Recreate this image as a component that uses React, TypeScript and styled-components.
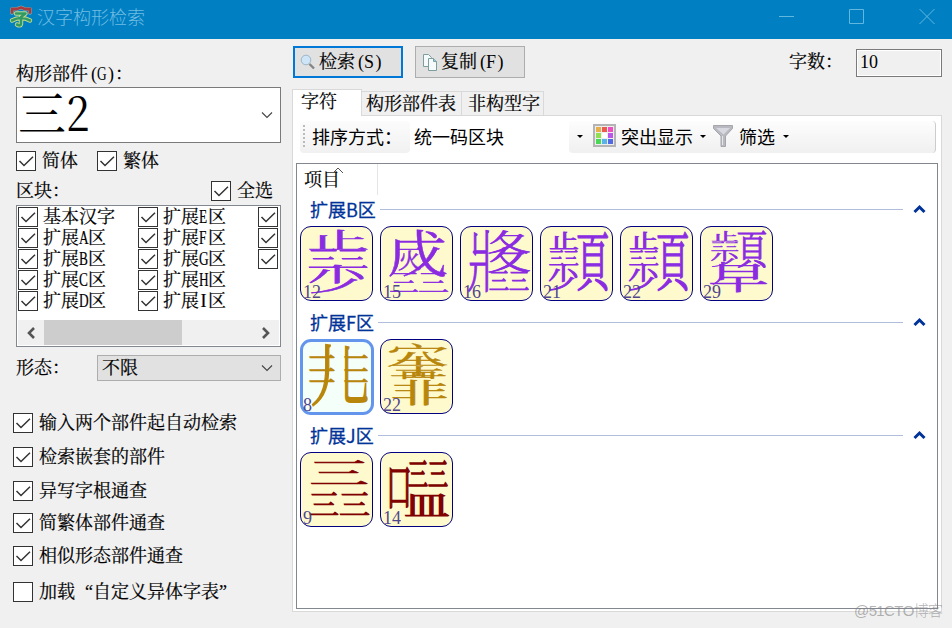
import React from "react";
import styled, { createGlobalStyle } from "styled-components";

const Global = createGlobalStyle`
  * { box-sizing: border-box; }
  body { margin: 0; background: #f0f0f0; overflow: hidden; }
`;
const songti = `"Liberation Serif", "Noto Serif CJK SC", "Noto Sans CJK SC", serif`;
const heiti = `"Noto Sans CJK SC", sans-serif`;

const Window = styled.div`
  position: relative; width: 952px; height: 628px; background: #f0f0f0;
  font: 18px/20px ${songti}; color: #000; white-space: nowrap;
  display: flex; flex-direction: column;
`;
const TitleBar = styled.header`
  height: 39px; flex: none; background: #0080c2; color: #72bce2; display: flex;
  align-items: flex-start; padding: 5px 17px 0 9px; font: 300 18px/24px ${heiti};
`;
const Title = styled.span` margin: -1px 0 0 4px; flex: 1; `;
const WindowButtons = styled.div` display: flex; gap: 54px; padding-top: 3px; svg { display: block; } `;
const Body = styled.main` flex: 1; display: flex; `;
const Sidebar = styled.aside` width: 292px; padding: 25px 11px 0 16px; display: flex; flex-direction: column; -webkit-text-stroke: 0.2px #000; `;
const Content = styled.section` width: 650px; padding-top: 7px; display: flex; flex-direction: column; `;
const Label = styled.span<{ $w?: number }>` ${p => p.$w ? `width:${p.$w}px;flex:none;` : ""} `;
const Letter = styled.span` display: inline-block; width: 9px; transform: scaleX(0.74); transform-origin: left; `;
const NarrowLetter = styled(Letter)` transform: none; text-align: center; `;
const Keys = styled.span` display: inline-flex; padding-left: 3px; -webkit-text-stroke: 0; `;
const Paren = styled.span` width: 6px; &:last-child { width: 9px; padding-left: 2px; } `;
const Quote = styled.span<{ $right?: boolean }>` display: inline-block; width: 18px; text-align: ${p => p.$right ? "right" : "left"}; `;
const PartsCombo = styled.div`
  height: 56px; margin-top: 3px; background: #fff; border: 1px solid #7a7a7a; padding: 0 7px 0 2px;
  display: flex; align-items: center; justify-content: space-between; font-size: 48px; line-height: 52px; -webkit-text-stroke: 0;
`;
const PartsText = styled.span` padding-bottom: 4px; margin-left: -1px; `;
const Digit = styled.span` display: inline-block; transform: scale(0.88, 0.97); transform-origin: left 75%; font-family: "Noto Serif CJK SC", "Liberation Serif", serif; `;
const Row = styled.div<{ $top: number }>` display: flex; align-items: center; height: 20px; margin-top: ${p => p.$top}px; `;
const Box = styled.span`
  width: 20px; height: 20px; flex: none; border: 1px solid #333; background: #fff; display: block;
  svg { display: block; }
`;
const CheckText = styled.span<{ $gap: number }>` margin-left: ${p => p.$gap}px; `;
const Spacer = styled.span` flex: 1; `;
const BlockList = styled.div` height: 142px; margin-top: 4px; border: 1px solid #828790; background: #fff; padding: 1px; display: flex; flex-direction: column; `;
const BlockGrid = styled.div`
  flex: 1; overflow: hidden; display: grid; grid-auto-flow: column;
  grid-template-rows: repeat(5, 21px); grid-auto-columns: 120px;
`;
const BlockItem = styled.div` display: flex; height: 20px; line-height: 20px; `;
const Scrollbar = styled.div` height: 25px; background: #f0f0f0; display: flex; align-items: center; `;
const Thumb = styled.div` width: 139px; height: 25px; background: #cdcdcd; margin-right: 71px; `;
const ArrowSlot = styled.span` width: 26px; display: flex; justify-content: center; `;
const Select = styled.div`
  flex: 1; height: 26px; border: 1px solid #adadad; background: #e1e1e1; display: flex; align-items: center;
  justify-content: space-between; padding: 0 7px 0 4px;
`;
const Options = styled.div` margin: 18px 0 0 -3px; `;

const TopBar = styled.div` height: 32px; display: flex; align-items: center; padding-left: 1px; -webkit-text-stroke: 0.2px #000; `;
const Button = styled.button<{ $primary?: boolean }>`
  width: 110px; height: 32px; margin-right: 12px; font: inherit; background: #e1e1e1;
  border: ${p => p.$primary ? "2px solid #0078d7" : "1px solid #adadad"};
  padding: 0 0 1px ${p => p.$primary ? 5 : 6}px;
  display: flex; align-items: center; gap: 3px; color: #000;
`;
const Count = styled.div` width: 86px; height: 28px; border: 1px solid #7a7a7a; padding: 2px 3px; box-shadow: inset 0 0 0 1px #fff; margin-top: 2px; -webkit-text-stroke: 0; `;
const Tabs = styled.div` height: 37px; display: flex; align-items: flex-end; -webkit-text-stroke: 0.2px #000; `;
const Tab = styled.div<{ $w: number; $pad: number; $active?: boolean }>`
  width: ${p => p.$w}px; height: ${p => p.$active ? 27 : 24}px; padding: 2px 0 0 ${p => p.$pad}px;
  background: ${p => p.$active ? "#fff" : "#f0f0f0"}; border: 1px solid #d9d9d9; border-bottom: 0;
  border-left-width: ${p => p.$active ? 1 : 0}px; margin-bottom: ${p => p.$active ? -1 : 0}px; position: relative; z-index: 1;
`;
const Panel = styled.div` height: 497px; border: 1px solid #d9d9d9; background: #fff; padding: 5px 3px 2px 3px; display: flex; flex-direction: column; `;
const Toolbar = styled.div`
  height: 32px; margin: 0 2px 10px 4px; display: flex; align-items: center; font-family: ${heiti};
`;
const SortLabel = styled.div` width: 110px; height: 32px; line-height: 28px; padding: 0 0 2px 3px; background: linear-gradient(#fcfcfc, #f1f1f1); display: flex; align-items: center; gap: 7px; border-radius: 4px; `;
const Grip = styled.span` width: 2px; height: 23px; background: repeating-linear-gradient(#bbb 0 2px, transparent 2px 4px); `;
const SortField = styled.div` width: 159px; height: 30px; line-height: 29px; background: #fff; padding-left: 4px; `;
const ToolGroup = styled.div`
  flex: 1; height: 32px; display: flex; align-items: center; background: linear-gradient(#fdfdfd, #f0f0f0);
  border-right: 1px solid #ccc; border-radius: 4px; padding: 0 0 3px 8px;
`;
const Caret = styled.span<{ $l?: number; $r?: number }>`
  border: 3px solid transparent; border-top-color: #000; border-bottom: 0;
  margin: 2px ${p => p.$r || 0}px 0 ${p => p.$l || 0}px;
`;
const ToolText = styled.span<{ $gap: number }>` margin-left: ${p => p.$gap}px; `;
const ListView = styled.div` flex: 1; border: 1px solid #828790; background: #fff; `;
const ColumnHead = styled.div` position: relative; width: 81px; height: 31px; border-right: 1px solid #e5e5e5; padding: 6px 0 0 7px; -webkit-text-stroke: 0.2px #000; svg { position: absolute; left: 35px; top: 3px; } `;
const Group = styled.div` height: 113px; padding: 4px 11px 0 3px; `;
const GroupHead = styled.div` height: 20px; display: flex; align-items: center; padding-left: 10px; color: #003399; font: 18px/20px ${heiti}; -webkit-text-stroke: 0.3px #003399; svg { margin: 0 0 1px 10px; } `;
const Line = styled.span` height: 1px; flex: 1; background: #b0bddb; margin-left: 4px; `;
const Cards = styled.div` display: flex; gap: 7px; margin-top: 7px; `;
const Card = styled.div<{ $selected?: boolean }>`
  position: relative; width: ${p => p.$selected ? 74 : 73}px; height: ${p => p.$selected ? 76 : 75}px; border-radius: 11px;
  margin: ${p => p.$selected ? "0 -1px -1px 0" : "0"};
  border: ${p => p.$selected ? "3px solid #6495ed" : "1px solid #000080"};
  background: ${p => p.$selected ? "#f5fffa" : "#fffacd"};
`;
const GlyphArt = styled.svg<{ $inset?: boolean }>` display: block; overflow: visible; margin: ${p => p.$inset ? "-2px" : "0"}; width: 71px; height: 73px; `;
const Strokes = styled.span<{ $inset?: boolean }>`
  position: absolute; left: ${p => p.$inset ? 0 : 2}px; bottom: ${p => p.$inset ? -3 : -2}px; color: #483d8b; opacity: .95;
  font-size: 18px; line-height: 20px;
`;
const Watermark = styled.div` position: absolute; left: 854px; top: 600px; color: rgba(130,130,130,.6); font: 300 15px/22px "Liberation Sans", "Noto Sans CJK SC", sans-serif; letter-spacing: -0.6px; `;

const Check = ({ on = true }: { on?: boolean }) => (
  <Box>{on && <svg width="18" height="18"><path d="M2.5 9 7 13.5 16 4.8" fill="none" stroke="#333" strokeWidth="1.5" /></svg>}</Box>
);
const Down = () => <svg width="12" height="8"><path d="M1 1.5 6 6.5 11 1.5" fill="none" stroke="#444" strokeWidth="1.1" /></svg>;
const Shortcut = ({ k, narrow }: { k: string; narrow?: boolean }) => (
  <Keys><Paren>(</Paren>{narrow ? <NarrowLetter>{k}</NarrowLetter> : <Letter>{k}</Letter>}<Paren>)</Paren></Keys>
);

// Each part is [character, x, y, width, height] of its em box in the card.
type Part = [string, number, number, number, number];
const Ideograph = ({ parts, color, weight = 0.8, inset }: { parts: Part[]; color: string; weight?: number; inset?: boolean }) => (
  <GlyphArt viewBox="0 0 71 73" $inset={inset} fill={color} stroke={color} strokeWidth={weight} fontFamily='"Noto Serif CJK SC", "Liberation Serif", serif' fontSize="100">
    {parts.map(([c, x, y, w, h], i) => (
      <text key={i} vectorEffect="non-scaling-stroke" transform={`translate(${x} ${y + h * 0.88}) scale(${w / 100} ${h / 100})`}>{c}</text>
    ))}
  </GlyphArt>
);
const pin = (x: number, y: number, w: number, h: number): Part[] => [
  ["止", x, y, w * 0.5, h * 0.32], ["三", x, y + h * 0.29, w * 0.25, h * 0.31], ["三", x + w * 0.24, y + h * 0.29, w * 0.25, h * 0.31],
  ["少", x - w * 0.02, y + h * 0.55, w * 0.52, h * 0.46], ["頁", x + w * 0.45, y - 2, w * 0.56, h + 4],
];
type Entry = { n: number; parts: Part[]; selected?: boolean; weight?: number };
const groups: { name: string; color: string; items: Entry[] }[] = [
  { name: "B", color: "#8a2be2", items: [
    { n: 12, weight: 0.9, parts: [["止", 6, 2, 63, 22], ["三", 7, 20, 31, 23], ["三", 36, 20, 31, 23], ["少", 6, 37, 60, 30]] },
    { n: 15, weight: 0.5, parts: [["戊", 6, 1, 60, 50], ["灭", 17, 19, 23, 25], ["三", 8, 43, 30, 24], ["三", 37, 43, 31, 24]] },
    { n: 16, weight: 1.1, parts: [["爿", 5, 1, 29, 66], ["夂", 26, 3, 44, 24], ["夂", 26, 20, 44, 26], ["三", 28, 42, 20, 23], ["三", 48, 42, 20, 23]] },
    { n: 21, weight: 1, parts: pin(8, 4, 60, 60) },
    { n: 22, weight: 1, parts: pin(8, 4, 60, 60) },
    { n: 29, weight: 0.7, parts: [...pin(10, 4, 56, 36), ["早", 7, 35, 61, 31], ["丿", 5, 34, 30, 24]] },
  ] },
  { name: "F", color: "#b8860b", items: [
    { n: 8, selected: true, weight: 1.5, parts: [
      ["丿", 1, 1, 46, 67], ["一", 8, 8, 26, 20], ["一", 8, 21, 26, 20], ["一", 8, 32, 26, 20],
      ["乚", 37, 2, 34, 65], ["一", 43, 8, 24, 20], ["一", 43, 21, 24, 20], ["一", 43, 32, 24, 20],
    ] },
    { n: 22, weight: 0.7, parts: [["穴", 5, 3, 63, 24], ["圭", 8, 16, 59, 21], ["罒", 16, 30, 42, 18], ["非", 9, 39, 59, 27]] },
  ] },
  { name: "J", color: "#800000", items: [
    { n: 9, weight: 1, parts: [["三", 8, 5, 60, 29], ["三", 8, 37, 30, 28], ["三", 38, 37, 31, 28]] },
    { n: 14, weight: 1.3, parts: [["口", 5, 7, 26, 52], ["三", 27, 5, 20, 31], ["三", 47, 5, 20, 31], ["皿", 23, 38, 46, 28]] },
  ] },
];

const sideOptions: [string, number][] = [
  ["输入两个部件起自动检索", 17], ["检索嵌套的部件", 14], ["异写字根通查", 14],
  ["简繁体部件通查", 12], ["相似形态部件通查", 13],
];
const palette = ["#e8b04a", "#ed5a50", "#f04ec0", "#91df52", "#ffffff", "#b957ed", "#49d956", "#59b2e9", "#5269e6"];

export default function App() {
  return (
    <Window lang="zh-CN">
      <Global />
      <TitleBar>
        <svg width="24" height="24" viewBox="0 0 24 24" fill="none" strokeLinecap="round" strokeLinejoin="round">
          <path d="M3 8V4H8L12 2.5L16 4H21V8" stroke="#7fb9b2" strokeWidth="3.6" />
          <path d="M3 7.5V4H8L12 2.5L16 4H21V7.5" stroke="#a83a40" strokeWidth="2.8" />
          <path d="M7 8.5H16.5L12 12V19Q11.5 21.5 8 19.5M3 15.5Q12 10.5 21 15.5" stroke="#c9dc8d" strokeWidth="4.4" />
          <path d="M7 8.5H16.5L12 12V19Q11.5 21.5 8 19.5M3 15.5Q12 10.5 21 15.5" stroke="#319a62" strokeWidth="2.6" />
        </svg>
        <Title>汉字构形检索</Title>
        <WindowButtons>
          <svg width="16" height="17"><path d="M0 8.5h15" stroke="#62b7df" /></svg>
          <svg width="16" height="17"><path d="M.5 1.5h14v14H.5z" fill="none" stroke="#62b7df" /></svg>
          <svg width="16" height="17"><path d="m.5 1 15 15m0-15-15 15" stroke="#62b7df" /></svg>
        </WindowButtons>
      </TitleBar>
      <Body>
        <Sidebar>
          <Label>构形部件<Shortcut k="G" />：</Label>
          <PartsCombo><PartsText>三<Digit>2</Digit></PartsText><Down /></PartsCombo>
          <Row $top={8}><Check /><CheckText $gap={6}>简体</CheckText><CheckText $gap={19} /><Check /><CheckText $gap={6}>繁体</CheckText></Row>
          <Row $top={10}>区块：<Spacer /><Check /><CheckText $gap={6}>全选</CheckText><CheckText $gap={8} /></Row>
          <BlockList>
            <BlockGrid>
              <BlockItem><Check /><CheckText $gap={5}>基本汉字</CheckText></BlockItem>
              {"ABCDEFGHI".split("").map(l => (
                <BlockItem key={l}><Check /><CheckText $gap={5}>扩展{l === "I" ? <NarrowLetter>I</NarrowLetter> : <Letter>{l}</Letter>}区</CheckText></BlockItem>
              ))}
              {[0, 1, 2].map(i => <BlockItem key={i}><Check /></BlockItem>)}
            </BlockGrid>
            <Scrollbar>
              <ArrowSlot><svg width="10" height="12"><path d="M8 1 3 6l5 5" fill="none" stroke="#555" strokeWidth="2.6" /></svg></ArrowSlot>
              <Thumb />
              <ArrowSlot><svg width="10" height="12"><path d="m2 1 5 5-5 5" fill="none" stroke="#555" strokeWidth="2.6" /></svg></ArrowSlot>
            </Scrollbar>
          </BlockList>
          <Row $top={11}><Label $w={81}>形态：</Label><Select>不限<Down /></Select></Row>
          <Options>
            {sideOptions.map(([t, top]) => <Row key={t} $top={top}><Check /><CheckText $gap={6}>{t}</CheckText></Row>)}
            <Row $top={16}><Check on={false} /><CheckText $gap={6}>加载<Quote $right>“</Quote>自定义异体字表<Quote>”</Quote></CheckText></Row>
          </Options>
        </Sidebar>
        <Content>
          <TopBar>
            <Button $primary>
              <svg width="16" height="18"><circle cx="6" cy="7" r="4.8" fill="#cde5f7" stroke="#9eb5c7" /><path d="m9.5 11 4.5 4.5" stroke="#858585" strokeWidth="2.4" /></svg>
              <span>检索<Shortcut k="S" narrow /></span>
            </Button>
            <Button>
              <svg width="16" height="18" stroke="#7f9d9d" fill="#f5fbfb"><path d="M1.5 1.5h5l3 3v9h-8z" /><path d="M6.5 5.5h5l3 3v9h-8z" /><path d="M11.5 5.5v3h3" fill="#8fd0df" /></svg>
              <span>复制<Shortcut k="F" narrow /></span>
            </Button>
            <Spacer /><Label $w={67}>字数：</Label><Count>10</Count>
          </TopBar>
          <Tabs><Tab $active $w={70} $pad={8}>字符</Tab><Tab $w={100} $pad={4}>构形部件表</Tab><Tab $w={82} $pad={6}>非构型字</Tab></Tabs>
          <Panel>
            <Toolbar>
              <SortLabel><Grip />排序方式：</SortLabel>
              <SortField>统一码区块</SortField>
              <ToolGroup>
                <Caret $r={10} />
                <svg width="23" height="23"><rect x="1" y="1" width="21" height="21" fill="#eee" stroke="#b4b4b4" strokeWidth="2" />
                  {palette.map((c, i) => <rect key={c} x={3 + (i % 3) * 6} y={3 + Math.floor(i / 3) * 6} width="5" height="5" fill={c} />)}
                </svg>
                <ToolText $gap={5}>突出显示</ToolText><Caret $l={7} $r={7} />
                <svg width="21" height="24"><path d="M.5 1.5h19v3L12.5 12v10.500H8V12L.5 4.5z" fill="#b9b9c2" stroke="#a5a5ab" /><path d="M3 4h14L10.5 10.5" fill="#d8d8e0" /><path d="M9.5 12v9" stroke="#e5e5ea" /></svg>
                <ToolText $gap={5}>筛选</ToolText><Caret $l={8} />
              </ToolGroup>
            </Toolbar>
            <ListView>
              <ColumnHead>项目<svg width="12" height="7"><path d="M1 6 6 1l5 5" fill="none" stroke="#555" /></svg></ColumnHead>
              {groups.map(g => (
                <Group key={g.name}>
                  <GroupHead>扩展{g.name}区<Line />
                    <svg width="13" height="10"><path d="m1.5 8 5-5 5 5" fill="none" stroke="#003399" strokeWidth="3" /></svg>
                  </GroupHead>
                  <Cards>
                    {g.items.map(it => (
                      <Card key={it.n + g.name} $selected={it.selected}>
                        <Ideograph parts={it.parts} color={g.color} weight={it.weight} inset={it.selected} />
                        <Strokes $inset={it.selected}>{it.n}</Strokes>
                      </Card>
                    ))}
                  </Cards>
                </Group>
              ))}
            </ListView>
          </Panel>
        </Content>
      </Body>
      <Watermark>@51CTO博客</Watermark>
    </Window>
  );
}
